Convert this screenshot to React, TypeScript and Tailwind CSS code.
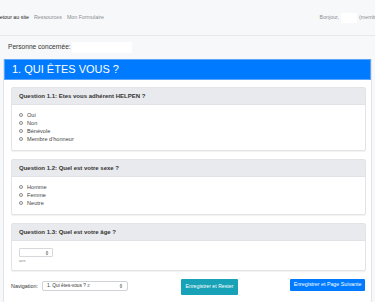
import React from 'react';

const font = { fontFamily: '"Liberation Sans", Arial, sans-serif' };

function Radio({ label }: { label: string }) {
  return (
    <label className="flex items-center gap-[4px] h-[8px]">
      <span className="w-[4px] h-[4px] rounded-full border-[0.8px] border-[#8a8a8a] bg-white" />
      <span className="text-[5.6px] text-[#444]">{label}</span>
    </label>
  );
}

function Spinner() {
  return (
    <svg width="4" height="6" viewBox="0 0 4 6" className="text-[#777]">
      <path d="M0.5 2.4 L2 0.8 L3.5 2.4 Z" fill="currentColor" />
      <path d="M0.5 3.6 L2 5.2 L3.5 3.6 Z" fill="currentColor" />
    </svg>
  );
}

function QuestionCard({
  title,
  children,
  bodyClass,
}: {
  title: string;
  children: React.ReactNode;
  bodyClass: string;
}) {
  return (
    <div className="bg-white border border-[#e2e4e7] rounded-[2px] shadow-[0_1px_1px_rgba(0,0,0,0.06)]">
      <div className="h-[17px] px-[7px] flex items-center bg-[#e9eaed] border-b border-[#e0e2e5]">
        <span className="text-[6px] font-bold text-[#333]">{title}</span>
      </div>
      <div className={bodyClass}>{children}</div>
    </div>
  );
}

export default function App() {
  return (
    <div className="w-[375px] h-[302px] overflow-hidden bg-[#f7f8fa]" style={font}>
      {/* Barre de navigation */}
      <div className="h-[36px] flex items-center border-b border-[#e6e8eb] whitespace-nowrap">
        <div className="flex items-center gap-[5px] ml-[-4px] text-[5.3px]">
          <span className="text-[#222]">Retour au site</span>
          <span className="text-[#8a8d91]">Ressources</span>
          <span className="text-[#8a8d91]">Mon Formulaire</span>
        </div>
        <div className="ml-auto flex items-center text-[5.3px] text-[#8a8d91] mr-[-7px]">
          <span>Bonjour,</span>
          <span className="w-[16px] h-[10px] bg-white mx-[2px]" />
          <span>(membre)</span>
        </div>
      </div>

      {/* Personne concernée */}
      <div className="h-[20px] flex items-center pl-[8px] pt-[2px]">
        <span className="text-[6.6px] text-[#333]">Personne concernée:</span>
        <span className="w-[60px] h-[11px] bg-white ml-[1px]" />
      </div>

      {/* Section */}
      <div className="mx-[3px] mt-[3px] bg-white border-x border-[#e1e3e6] h-[260px]">
        <div className="h-[21px] bg-[#007bff] border border-[#5aa5f7] flex items-center px-[7px]">
          <span className="text-[11px] text-white">1. QUI ÊTES VOUS ?</span>
        </div>

        <div className="pl-[7px] pr-[5px] pt-[7px] flex flex-col gap-[8px]">
          <QuestionCard
            title="Question 1.1: Etes vous adhérent HELPEN ?"
            bodyClass="px-[7px] pt-[6px] pb-[7px] flex flex-col"
          >
            <Radio label="Oui" />
            <Radio label="Non" />
            <Radio label="Bénévole" />
            <Radio label="Membre d'honneur" />
          </QuestionCard>

          <QuestionCard
            title="Question 1.2: Quel est votre sexe ?"
            bodyClass="px-[7px] pt-[6px] pb-[7px] flex flex-col"
          >
            <Radio label="Homme" />
            <Radio label="Femme" />
            <Radio label="Neutre" />
          </QuestionCard>

          <QuestionCard
            title="Question 1.3: Quel est votre âge ?"
            bodyClass="px-[7px] pt-[7px] pb-[6px] flex flex-col"
          >
            <div className="w-[34px] h-[9px] border border-[#d6d8db] rounded-[1px] bg-white flex items-center justify-end pr-[3px]">
              <Spinner />
            </div>
            <span className="text-[4px] text-[#888] mt-[1px] leading-[6px]">ans</span>
          </QuestionCard>

          {/* Navigation */}
          <div className="flex items-start pr-[1px]">
            <div className="flex items-center h-[12px] mt-[1px]">
              <span className="text-[5.4px] text-[#333]">Navigation:</span>
              <div className="w-[86px] h-[10px] ml-[4px] border border-[#cfd2d6] rounded-[2px] bg-white flex items-center px-[4px]">
                <span className="text-[4.8px] text-[#333]">1. Qui êtes-vous ? ≠</span>
                <span className="ml-auto">
                  <Spinner />
                </span>
              </div>
            </div>
            <button className="ml-[53px] w-[57px] h-[16px] bg-[#17a2b8] rounded-[1px] text-white text-[5.2px] flex items-center justify-center">
              Enregistrer et Rester
            </button>
            <button className="ml-auto w-[75px] h-[12px] bg-[#007bff] rounded-[1px] text-white text-[5.3px] flex items-center justify-center">
              Enregistrer et Page Suivante
            </button>
          </div>
        </div>
      </div>
    </div>
  );
}
